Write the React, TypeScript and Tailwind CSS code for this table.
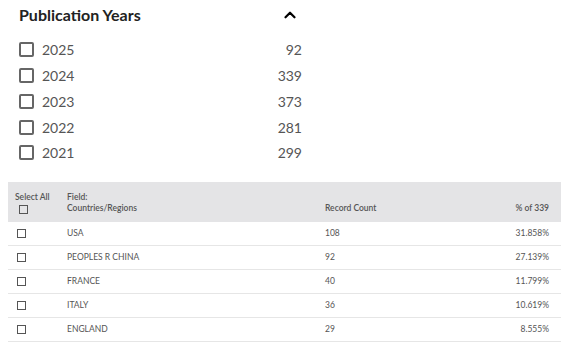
import React from 'react';
import { ChevronUp } from 'lucide-react';

const years = [
  { year: '2025', count: 92 },
  { year: '2024', count: 339 },
  { year: '2023', count: 373 },
  { year: '2022', count: 281 },
  { year: '2021', count: 299 },
];

const countries = [
  { name: 'USA', count: 108, pct: '31.858%' },
  { name: 'PEOPLES R CHINA', count: 92, pct: '27.139%' },
  { name: 'FRANCE', count: 40, pct: '11.799%' },
  { name: 'ITALY', count: 36, pct: '10.619%' },
  { name: 'ENGLAND', count: 29, pct: '8.555%' },
];

export default function App() {
  return (
    <div className="w-[572px] h-[348px] bg-white overflow-hidden" style={{ fontFamily: '"Source Sans Pro", Lato, "Noto Sans", sans-serif' }}>
      <div className="pl-[19px] w-[302px] pt-[4px]">
        <div className="flex items-center justify-between h-[22px]">
          <span className="text-[16px] font-bold text-[#222]">Publication Years</span>
          <ChevronUp size={18} strokeWidth={3} className="text-black mr-[3px]" />
        </div>
        <div className="mt-[11px] flex flex-col">
          {years.map((y) => (
            <div key={y.year} className="flex items-center h-[25.75px] text-[14px] text-[#555]">
              <span className="w-[15px] h-[15px] border-2 border-[#666] rounded-[2px] mr-[8px]" />
              <span className="flex-1">{y.year}</span>
              <span>{y.count}</span>
            </div>
          ))}
        </div>
      </div>

      <div className="ml-[8px] w-[553px] mt-[16px] text-[8.5px] text-[#555]">
        <div className="flex bg-[#e4e4e6] h-[40px] items-start pt-[10px] font-semibold text-[#555]">
          <div className="w-[59px] pl-[7px] flex flex-col">
            <span className="leading-[11px]">Select All</span>
            <span className="w-[9px] h-[9px] border border-[#555] ml-[4px] mt-[2px]" />
          </div>
          <div className="w-[258px] flex flex-col leading-[11px]">
            <span>Field:</span>
            <span>Countries/Regions</span>
          </div>
          <div className="flex-1 pt-[11px] leading-[11px]">Record Count</div>
          <div className="pr-[12px] pt-[11px] leading-[11px]">% of 339</div>
        </div>
        {countries.map((c) => (
          <div key={c.name} className="flex items-center h-[24px] border-b border-[#e6e6e6]">
            <div className="w-[59px] pl-[9px]">
              <span className="block w-[9px] h-[9px] border border-[#555]" />
            </div>
            <div className="w-[258px]">{c.name}</div>
            <div className="flex-1">{c.count}</div>
            <div className="pr-[12px]">{c.pct}</div>
          </div>
        ))}
      </div>
    </div>
  );
}
